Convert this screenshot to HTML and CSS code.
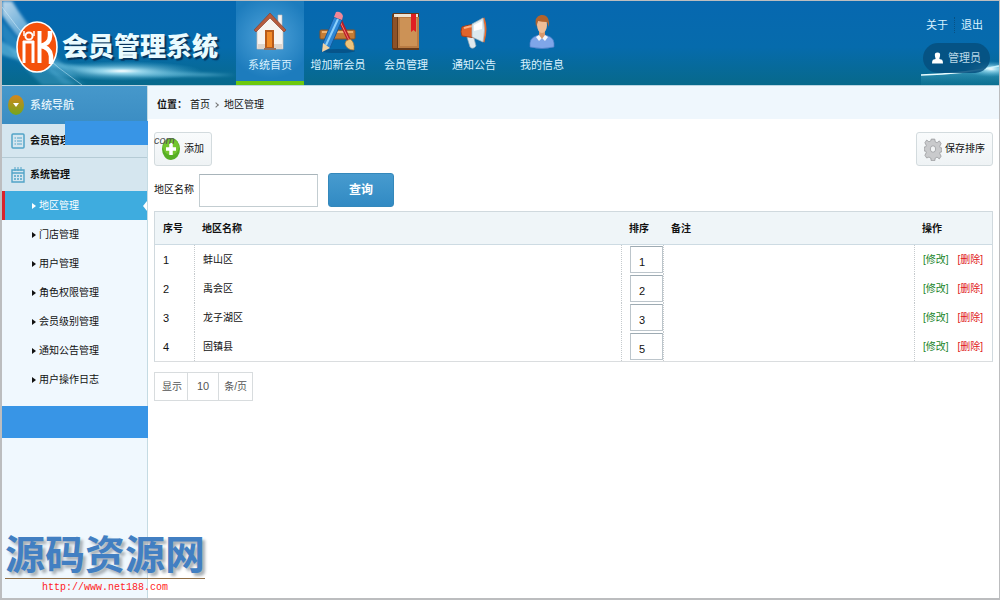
FILE: index.html
```html
<!DOCTYPE html>
<html lang="zh-CN">
<head>
<meta charset="utf-8">
<title>会员管理系统</title>
<link rel="stylesheet" href="styles.css">
</head>
<body>
<div class="app">
  <header class="header">
    <div class="brand">
      <svg class="rays" viewBox="0 0 234 84" preserveAspectRatio="none" aria-hidden="true">
        <defs>
          <linearGradient id="ray" x1="0" y1="0" x2="1" y2="1"><stop offset="0" stop-color="#fff" stop-opacity=".75"/><stop offset=".5" stop-color="#9ddcff" stop-opacity=".35"/><stop offset="1" stop-color="#6cc6ee" stop-opacity=".1"/></linearGradient>
          <radialGradient id="glow"><stop offset="0" stop-color="#fff"/><stop offset=".25" stop-color="#bdf0ff" stop-opacity=".7"/><stop offset="1" stop-color="#54b8dd" stop-opacity="0"/></radialGradient>
          <filter id="soft"><feGaussianBlur stdDeviation="1.500"/></filter>
        </defs>
        <g filter="url(#soft)">
          <path d="M0 0h10Q34 40 84 84H62Q20 44 0 14z" fill="url(#ray)"/>
          <path d="M0 20Q24 52 74 84H40Q14 60 0 36z" fill="#62bde6" opacity=".3"/>
          <path d="M0 40Q30 64 118 68T234 74Q130 80 50 66T0 40z" fill="#8edcf5" opacity=".45"/>
        </g>
        <path d="M0 6Q30 50 80 84" fill="none" stroke="#d9f3ff" stroke-width="1" opacity=".5"/>
        <ellipse cx="120" cy="70" rx="80" ry="10" fill="url(#glow)"/>
      </svg>
      <svg class="logo" viewBox="0 0 42 52" aria-hidden="true">
        <ellipse cx="21" cy="26" rx="20" ry="25" fill="#f4510b" stroke="#fff" stroke-width="1.6"/>
        <g fill="none" stroke="#fff">
          <path d="M8 10v5M18 10v5" stroke-width="1.5"/>
          <circle cx="13" cy="15" r="3.600" stroke-width="2"/>
          <path d="M8 20v22M17 20v22M7 21h11" stroke-width="3"/>
          <path d="M23.500 10v32" stroke-width="4"/>
          <path d="M34 10v5q0 8-10 10 10 1 11 10v8" stroke-width="4.500"/>
        </g>
      </svg>
      <h1 class="brand-name">会员管理系统</h1>
    </div>
    <nav class="topnav">
      <a class="topnav-item is-active" href="#">
        <svg class="nav-icon" viewBox="0 0 40 44" aria-hidden="true">
          <path d="M28 5h4v12h-4z" fill="#f6f3f1" stroke="#c7bdb8" stroke-width=".6"/>
          <path d="M7 19 20 5l13 14v20H7z" fill="#f6f4f1" stroke="#c3b8b0" stroke-width=".7"/>
          <path d="M8 34h24v5H8z" fill="#ddd5cc"/>
          <path d="M4 20 20 3l16 17-2 2L20 8 6 22z" fill="#b65b3c" stroke="#7f3d2b" stroke-width=".6"/>
          <path d="M15 20h9v18h-9z" fill="#b85b19"/><path d="M17 22h5v15h-5z" fill="#f28b28"/>
          <path d="M14 38h12v2H14z" fill="#8d756a"/>
        </svg>
        <span>系统首页</span>
      </a>
      <a class="topnav-item" href="#">
        <svg class="nav-icon" viewBox="0 0 40 44" aria-hidden="true">
          <ellipse cx="20" cy="41" rx="17" ry="2" fill="#063e6c" opacity=".5"/>
          <rect x="2" y="20" width="35" height="9" rx="1" fill="#c47c35" stroke="#8a5224"/>
          <path d="M4 22h31" stroke="#efb16e" stroke-width="2"/>
          <path d="m17 4 4-1 12 27-3 2z" fill="#b91c25"/><path d="m19 5 12 25" stroke="#f17a70"/>
          <path d="m28 31 4-2q5 3 4 11-7 0-9-6z" fill="#edc47c" stroke="#a87435" stroke-width=".7"/>
          <path d="m16 7 8 3L12 38l-8 4 1-9z" fill="#2e87d5" stroke="#135b9d"/>
          <path d="M20 9 8 35" stroke="#8cd0fb" stroke-width="2"/>
          <path d="m5 33 7 5-8 4z" fill="#efd2a2"/>
          <path d="m16 7 2-5q5-1 7 4l-1 4z" fill="#f18797"/>
        </svg>
        <span>增加新会员</span>
      </a>
      <a class="topnav-item" href="#">
        <svg class="nav-icon" viewBox="0 0 40 44" aria-hidden="true">
          <path d="M7 3h26v37H8q-2 0-2-3V5z" fill="#653919"/>
          <path d="M8 4h24v3H8z" fill="#eee4d3"/>
          <path d="M12 7h21v31H12z" fill="#b97b43"/><path d="M14 8h17v28H14z" fill="#cc9256"/>
          <path d="M7 7h4v31H7z" fill="#8d5229"/>
          <path d="M25 4h5v18l-2.500-2-2.500 2z" fill="#df1f22"/>
        </svg>
        <span>会员管理</span>
      </a>
      <a class="topnav-item" href="#">
        <svg class="nav-icon" viewBox="0 0 40 44" aria-hidden="true">
          <path d="M12 24h7l3 12q-3 4-6 1z" fill="#dfe8ed" stroke="#8ba5b5" stroke-width=".7"/>
          <path d="M8 17q6-2 14-3v14l-14-2q-2-4 0-9z" fill="#e2642b" stroke="#a83e18"/>
          <path d="M10 18q6-2 11-2" stroke="#ffb080" stroke-width="2" fill="none"/>
          <path d="M29 8q4 10 0 24" stroke="#e5692d" stroke-width="3" fill="none"/>
          <path d="m18 14 11-6q3 12 0 24l-11-5z" fill="#dce9ee" stroke="#9fb5bf" stroke-width=".7"/>
          <path d="m20 15 8-4v8l-8 2z" fill="#fff"/>
        </svg>
        <span>通知公告</span>
      </a>
      <a class="topnav-item" href="#">
        <svg class="nav-icon" viewBox="0 0 40 44" aria-hidden="true">
          <path d="M8 37q-1-9 6-11l6-2 6 2q7 2 6 11-12 3-24 0z" fill="#7fa6e9" stroke="#527fc8" stroke-width=".7"/>
          <path d="m14 27 6-4 6 4-3 4-3-3-3 3z" fill="#f4f7fc"/>
          <path d="M17 19h6v6l-3 4-3-4z" fill="#d9996d"/>
          <ellipse cx="20" cy="15" rx="5" ry="8" fill="#eebd96"/>
          <path d="M14 17Q12 6 19 5q9-1 8 12l-2-5q-5 0-9-1z" fill="#b2632c"/>
        </svg>
        <span>我的信息</span>
      </a>
    </nav>
    <div class="account">
      <svg class="flare" viewBox="0 0 78 30" preserveAspectRatio="none" aria-hidden="true">
        <defs><linearGradient id="sea" x2="0" y2="1"><stop offset="0" stop-color="#7fd6ea"/><stop offset="1" stop-color="#1d86a3" stop-opacity=".4"/></linearGradient></defs>
        <path d="M0 20Q44 18 78 10V30H0z" fill="url(#sea)" opacity=".6"/>
        <path d="M0 20Q44 19 78 11" fill="none" stroke="#e9fdff" stroke-width="1.500"/>
        <ellipse cx="70" cy="14" rx="26" ry="8" fill="url(#glow)"/>
      </svg>
      <div class="account-links"><a href="#">关于</a><a href="#">退出</a></div>
      <div class="user">
        <svg class="user-icon" viewBox="0 0 12 12" aria-hidden="true"><path d="M6 0c5 0 2 6 2 7l3 1q1 1 1 4H0q0-3 1-4l3-1C4 6 1 0 6 0z" fill="#fff"/></svg>
        <span>管理员</span>
      </div>
    </div>
  </header>
  <div class="body">
    <aside class="sidebar">
      <h2 class="side-title">
        <svg class="side-badge" viewBox="0 0 16 20" aria-hidden="true"><defs><linearGradient id="badge" x2="0" y2="1"><stop offset="0" stop-color="#d4861c"/><stop offset="1" stop-color="#73a61d"/></linearGradient></defs><ellipse cx="8" cy="10" rx="8" ry="10" fill="url(#badge)"/><path d="M5 8h6l-3 4z" fill="#fff"/></svg>
        系统导航
      </h2>
      <div class="side-group">
        <svg class="side-icon" viewBox="0 0 14 16" fill="none" stroke="#52a4c8" aria-hidden="true"><rect x="1" y="1" width="12" height="14" rx="1" stroke-width="1.500"/><path d="M3.500 5h1.500M6 5h5M3.500 8h1.500M6 8h5M3.500 11h1.500M6 11h5"/></svg>
        <a href="#">会员管理</a>
        <span class="side-cover"></span>
      </div>
      <div class="side-group">
        <svg class="side-icon" viewBox="0 0 14 16" fill="none" stroke="#52a4c8" aria-hidden="true"><path d="M1 3h12v12H1zM1 6h12" stroke-width="1.400"/><path d="M4 0v4M7 0v4M10 0v4"/><path d="M3 9h8M3 12h8" stroke-width="1.500" stroke-dasharray="2 1"/></svg>
        <a href="#">系统管理</a>
      </div>
      <ul class="side-list">
        <li class="is-active"><a href="#">地区管理</a></li>
        <li><a href="#">门店管理</a></li>
        <li><a href="#">用户管理</a></li>
        <li><a href="#">角色权限管理</a></li>
        <li><a href="#">会员级别管理</a></li>
        <li><a href="#">通知公告管理</a></li>
        <li><a href="#">用户操作日志</a></li>
      </ul>
      <div class="side-band"></div>
    </aside>
    <main class="main">
      <div class="crumbs"><b>位置：</b><a href="#">首页</a><i class="crumb-arrow"></i><a href="#">地区管理</a></div>
      <div class="content">
        <div class="toolbar">
          <button class="tool tool-add" type="button">
            <svg class="add-icon" viewBox="0 0 18 22" aria-hidden="true"><ellipse cx="9" cy="11" rx="9" ry="11" fill="#56ae24"/><ellipse cx="9" cy="9" rx="8" ry="8" fill="#74c52e"/><path d="M9 5v12M4 11h10" stroke="#fff" stroke-width="3.500"/></svg>
            添加
            <span class="stamp">com</span>
          </button>
          <button class="tool" type="button">
            <svg class="gear-icon" viewBox="0 0 20 24" aria-hidden="true"><g fill="#c9cacc" stroke="#929497" stroke-width=".8"><path d="M8 1h4l.5 3 2 1 2.500-2 2 3-1.500 3 .5 1.500 2 .5v4l-2 .5-.5 1.500 1.500 3-2 3-2.500-2-2 1-.5 3H8l-.5-3-2-1L3 22l-2-3 1.500-3-.5-1.500L0 14v-4l2-.5L2.500 8 1 5l2-3 2.500 2 2-1z"/><ellipse cx="10" cy="12" rx="3" ry="3.600" fill="#f2f4f5"/></g></svg>
            保存排序
          </button>
        </div>
        <form class="search" onsubmit="return false">
          <label for="area">地区名称</label>
          <input id="area" class="search-input" type="text">
          <button class="search-button" type="submit">查询</button>
        </form>
        <table class="grid">
          <colgroup><col class="c-no"><col><col class="c-sort"><col class="c-note"><col class="c-op"></colgroup>
          <thead><tr><th>序号</th><th>地区名称</th><th>排序</th><th>备注</th><th>操作</th></tr></thead>
          <tbody>
            <tr><td>1</td><td>蚌山区</td><td><input type="text" value="1" aria-label="蚌山区排序"></td><td></td><td><a class="edit" href="#">[修改]</a><a class="del" href="#">[删除]</a></td></tr>
            <tr><td>2</td><td>禹会区</td><td><input type="text" value="2" aria-label="禹会区排序"></td><td></td><td><a class="edit" href="#">[修改]</a><a class="del" href="#">[删除]</a></td></tr>
            <tr><td>3</td><td>龙子湖区</td><td><input type="text" value="3" aria-label="龙子湖区排序"></td><td></td><td><a class="edit" href="#">[修改]</a><a class="del" href="#">[删除]</a></td></tr>
            <tr><td>4</td><td>固镇县</td><td><input type="text" value="5" aria-label="固镇县排序"></td><td></td><td><a class="edit" href="#">[修改]</a><a class="del" href="#">[删除]</a></td></tr>
          </tbody>
        </table>
        <div class="pager"><span>显示</span><span class="pager-size">10</span><span>条/页</span></div>
      </div>
    </main>
  </div>
  <div class="watermark"><strong>源码资源网</strong><span>http://www.net188.com</span></div>
</div>
</body>
</html>
```

FILE: styles.css
```css
* { box-sizing: border-box; }
body {
  margin: 0;
  font: 10px/16px "Liberation Sans", "Noto Sans CJK SC", sans-serif;
  color: #111;
}
a { color: inherit; text-decoration: none; }
button, input { font: inherit; color: inherit; }
h1, h2, ul { margin: 0; padding: 0; }

.app {
  position: relative;
  display: flex;
  flex-direction: column;
  min-height: 100vh;
  border: solid #bcbdbf;
  border-width: 1px 1px 2px 2px;
  background: #fff;
}

.header {
  display: flex;
  height: 85px;
  border-bottom: 1px solid #b9d5e2;
  background: linear-gradient(#0668b0, #066bac 55%, #07698b);
}
.brand {
  position: relative;
  display: flex;
  align-items: center;
  gap: 4px;
  width: 234px;
  padding: 8px 0 0 14px;
}
.rays { position: absolute; inset: 0; width: 100%; height: 100%; }
.logo { position: relative; width: 42px; height: 52px; }
.brand-name {
  position: relative;
  font-size: 26px;
  line-height: 32px;
  font-weight: 900;
  color: #e9fbff;
  text-shadow: 2px 2px 1px #07345b;
  white-space: nowrap;
}
.topnav { display: flex; }
.topnav-item {
  display: flex;
  flex-direction: column;
  align-items: center;
  gap: 3px;
  width: 68px;
  padding-top: 9px;
  font-size: 11px;
  color: #d9f2ff;
  white-space: nowrap;
}
.topnav-item.is-active {
  border-bottom: 4px solid #6cc90f;
  background: radial-gradient(circle at 50% 45%, #4fa3da, #1d7cbd 75%);
}
.nav-icon { width: 40px; height: 44px; }
.account {
  position: relative;
  display: flex;
  flex-direction: column;
  align-items: flex-end;
  gap: 10px;
  margin-left: auto;
  width: 78px;
  padding: 16px 9px 0 0;
  color: #d9f2ff;
}
.flare {
  position: absolute;
  bottom: 0;
  left: 0;
  width: 100%;
  height: 30px;
}
.account-links { display: flex; padding-right: 7px; font-size: 11px; }
.account-links a:last-child { margin-left: 6px; padding-left: 6px; border-left: 1px dotted #075184; }
.user {
  position: relative;
  display: flex;
  align-items: center;
  justify-content: center;
  gap: 5px;
  width: 67px;
  height: 30px;
  border-radius: 15px;
  background: #06507fdd;
  color: #b8d8e8;
  font-size: 11px;
}
.user-icon { width: 11px; height: 12px; }

.body { display: flex; flex: 1; }
.sidebar {
  width: 146px;
  border-right: 1px solid #c5dbe3;
  background: #f0f8fe;
}
.side-title {
  display: flex;
  align-items: center;
  gap: 6px;
  height: 38px;
  padding-left: 6px;
  background: linear-gradient(#4698cb, #3b8dc3);
  color: #e5f5fd;
  font-size: 11px;
  font-weight: 500;
}
.side-badge { width: 16px; height: 20px; }
.side-group {
  position: relative;
  display: flex;
  align-items: center;
  gap: 5px;
  height: 34px;
  padding-left: 9px;
  border-bottom: 1px solid #b5cbd5;
  background: #d5e6ef;
  font-weight: bold;
}
.side-group + .side-list { margin-top: -1px; }
.side-icon { width: 14px; height: 16px; }
.side-cover {
  position: absolute;
  top: -3px;
  right: -1px;
  width: 83px;
  height: 24px;
  background: #3895e6;
}
.side-list { list-style: none; }
.side-list li {
  position: relative;
  display: flex;
  align-items: center;
  height: 29px;
  padding-left: 30px;
}
.side-list li::before {
  content: "";
  margin-right: 3px;
  border: solid transparent;
  border-width: 3px 0 3px 4px;
  border-left-color: currentColor;
}
.side-list .is-active {
  padding-left: 27px;
  border-left: 3px solid #d8232d;
  background: #3eacdf;
  color: #fff;
}
.side-list .is-active::after {
  content: "";
  position: absolute;
  right: 0;
  border: solid transparent;
  border-width: 5px 4px 5px 0;
  border-right-color: #fff;
}
.side-band { height: 32px; margin: 12px -1px 0 0; background: #3895e6; }

.main { flex: 1; min-width: 0; }
.crumbs {
  display: flex;
  align-items: center;
  height: 33px;
  padding: 4px 9px 0;
  background: #eff7fd;
}
.crumbs b { width: 33px; white-space: nowrap; }
.crumb-arrow {
  width: 4px;
  height: 4px;
  margin: 0 6px 0 4px;
  border: solid #777;
  border-width: 1px 1px 0 0;
  transform: rotate(45deg);
}
.content { padding: 13px 6px 0; }
.toolbar { display: flex; justify-content: space-between; }
.tool {
  position: relative;
  display: flex;
  align-items: center;
  gap: 3px;
  height: 34px;
  padding: 0 7px;
  border: 1px solid #d3dbde;
  border-radius: 3px;
  background: linear-gradient(#f9fbfc, #eff3f5);
}
.add-icon { width: 18px; height: 22px; margin-right: 1px; }
.gear-icon { width: 18px; height: 24px; }
.stamp {
  position: absolute;
  top: -1px;
  left: -1px;
  color: #555;
  font-size: 11px;
  font-style: italic;
}
.search { display: flex; align-items: center; margin-top: 7px; }
.search-input {
  width: 119px;
  height: 33px;
  margin: 0 10px 0 5px;
  padding: 0 8px;
  border: 1px solid #c3cdd1;
  border-top-color: #a8b4ba;
}
.search-button {
  width: 66px;
  height: 34px;
  border: 1px solid #3488bb;
  border-radius: 3px;
  background: linear-gradient(#479bcf, #318ac3);
  color: #fff;
  font-size: 12px;
  font-weight: bold;
}
.grid {
  width: 100%;
  margin-top: 4px;
  border: 1px solid #d0d9de;
  border-bottom-color: #dadddf;
  border-collapse: separate;
  border-spacing: 0;
  table-layout: fixed;
}
.c-no { width: 39px; }
.c-sort { width: 42px; }
.c-note { width: 30%; }
.c-op { width: 78px; }
.grid th {
  height: 33px;
  padding: 1px 8px 0;
  border-bottom: 1px solid #cddbe3;
  background: #eff5f8;
  text-align: left;
}
.grid td { height: 29px; padding: 0 8px; white-space: nowrap; }
.grid td:first-child { font-size: 11px; }
.grid td + td { border-left: 1px dotted #c5cacd; }
.grid td:nth-child(3) { padding: 0 0 0 8px; }
.grid tbody input {
  display: block;
  width: 33px;
  height: 27px;
  padding: 5px 0 0 8px;
  border: 1px solid #bcc5cb;
  border-top-color: #9eabb3;
  font-size: 11px;
}
.edit { margin-right: 9px; color: #19852a; }
.del { color: #e01818; }
.pager {
  display: inline-flex;
  margin-top: 10px;
  border: 1px solid #d8dcde;
  color: #555;
}
.pager span { padding: 6px 5px; line-height: 15px; }
.pager .pager-size {
  padding: 6px 9px;
  border: solid #d8dcde;
  border-width: 0 1px;
  font-size: 11px;
}
.pager span:first-child { padding-left: 7px; }

.watermark {
  position: absolute;
  left: 3px;
  bottom: 2px;
  width: 200px;
  text-align: center;
}
.watermark strong {
  display: block;
  border-bottom: 1px solid #8f6d45;
  color: #427fc2;
  font-size: 40px;
  line-height: 46px;
  text-shadow: 3px 3px 3px #a9b0b6;
  white-space: nowrap;
}
.watermark span {
  color: #f22;
  font: 10px/17px "Liberation Mono", monospace;
}
```
